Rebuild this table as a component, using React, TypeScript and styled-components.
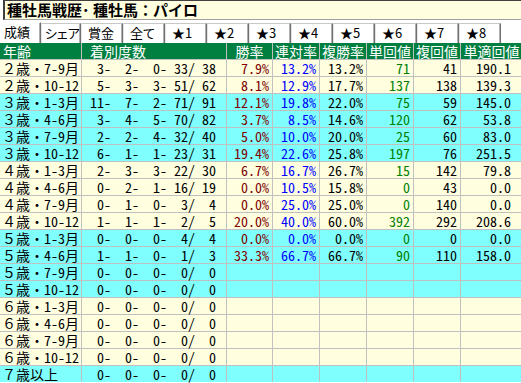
import React from "react";
import styled, { createGlobalStyle } from "styled-components";

const GlobalStyle = createGlobalStyle`
  html, body { margin: 0; padding: 0; background: #ffffff; overflow: hidden; }
  body { font-family: "Noto Sans Mono CJK JP", "Noto Sans CJK JP", monospace; color: #000; }
`;

const Page = styled.div`
  width: 521px;
  height: 383px;
  overflow: hidden;
  display: flex;
  flex-direction: column;
`;

const TitleBox = styled.div`
  margin-left: 3px;
  height: 20px;
  box-sizing: border-box;
  border-top: 1px solid #404040;
  border-left: 2px solid #404040;
  border-bottom: 1px solid #a0a0a0;
  background: #ffffe0;
  padding-left: 2px;
  font-family: "Noto Sans CJK JP", sans-serif;
  font-weight: bold;
  font-size: 15px;
  line-height: 18px;
  white-space: nowrap;
`;

const TabBar = styled.div`
  display: flex;
  height: 21px;
  margin-top: 2px;
`;

const Tab = styled.div<{ $active?: boolean; $w: number; $pad: number }>`
  width: ${(p) => p.$w}px;
  box-sizing: border-box;
  margin-top: ${(p) => (p.$active ? 0 : 1)}px;
  border-top: 1px solid ${(p) => (p.$active ? "#ffffff" : "#c8c8c8")};
  border-left: 1px solid ${(p) => (p.$active ? "#ffffff" : "#e4e4e4")};
  border-right: 1px solid #707070;
  box-shadow: inset -1px 0 0 #b0b0b0;
  padding-left: ${(p) => p.$pad}px;
  font-family: "Noto Sans CJK JP", sans-serif;
  font-feature-settings: "palt";
  font-size: 13px;
  line-height: 18px;
  white-space: nowrap;
  background: #ffffff;
`;

const Table = styled.div`
  display: flex;
  flex-direction: column;
  row-gap: 1px;
  background: #c0c0c0;
  width: 522px;
`;

const Row = styled.div`
  display: grid;
  grid-template-columns: 81px 144px 45px 46px 46px 46px 46px 61px;
  column-gap: 1px;
  height: 16px;
`;

const HeadCell = styled.div<{ $align?: "left" | "center"; $pad?: number }>`
  background: #008040;
  color: #ffffff;
  font-size: 14px;
  line-height: 16px;
  text-align: ${(p) => p.$align ?? "center"};
  padding-left: ${(p) => p.$pad ?? 0}px;
  white-space: nowrap;
`;

const Cell = styled.div<{ $bg: string; $color?: string; $right?: number; $left?: number }>`
  box-sizing: border-box;
  background: ${(p) => p.$bg};
  color: ${(p) => p.$color ?? "#000000"};
  font-size: 14px;
  line-height: 15px;
  padding-top: 1px;
  text-align: ${(p) => (p.$left !== undefined ? "left" : "right")};
  padding-left: ${(p) => p.$left ?? 0}px;
  padding-right: ${(p) => p.$right ?? 3}px;
  white-space: nowrap;
`;

const CountCell = styled.div<{ $bg: string }>`
  box-sizing: border-box;
  background: ${(p) => p.$bg};
  display: flex;
  padding-left: 1px;
  padding-top: 1px;
  font-size: 14px;
  line-height: 15px;
  white-space: nowrap;
`;

const Field = styled.span<{ $w: number }>`
  display: inline-block;
  width: ${(p) => p.$w}px;
  text-align: right;
`;

const CREAM = "#ffffe0";
const CYAN = "#80ffff";

type R = {
  age: string;
  c: [string, string, string, string, string];
  v?: [string, string, string, string, string, string];
  bg: string;
};

const rows: R[] = [
  { age: "２歳・7-9月", c: ["3-", "2-", "0-", "33/", "38"], v: ["7.9%", "13.2%", "13.2%", "71", "41", "190.1"], bg: CREAM },
  { age: "２歳・10-12", c: ["5-", "3-", "3-", "51/", "62"], v: ["8.1%", "12.9%", "17.7%", "137", "138", "139.3"], bg: CREAM },
  { age: "３歳・1-3月", c: ["11-", "7-", "2-", "71/", "91"], v: ["12.1%", "19.8%", "22.0%", "75", "59", "145.0"], bg: CYAN },
  { age: "３歳・4-6月", c: ["3-", "4-", "5-", "70/", "82"], v: ["3.7%", "8.5%", "14.6%", "120", "62", "53.8"], bg: CYAN },
  { age: "３歳・7-9月", c: ["2-", "2-", "4-", "32/", "40"], v: ["5.0%", "10.0%", "20.0%", "25", "60", "83.0"], bg: CYAN },
  { age: "３歳・10-12", c: ["6-", "1-", "1-", "23/", "31"], v: ["19.4%", "22.6%", "25.8%", "197", "76", "251.5"], bg: CYAN },
  { age: "４歳・1-3月", c: ["2-", "3-", "3-", "22/", "30"], v: ["6.7%", "16.7%", "26.7%", "15", "142", "79.8"], bg: CREAM },
  { age: "４歳・4-6月", c: ["0-", "2-", "1-", "16/", "19"], v: ["0.0%", "10.5%", "15.8%", "0", "43", "0.0"], bg: CREAM },
  { age: "４歳・7-9月", c: ["0-", "1-", "0-", "3/", "4"], v: ["0.0%", "25.0%", "25.0%", "0", "140", "0.0"], bg: CREAM },
  { age: "４歳・10-12", c: ["1-", "1-", "1-", "2/", "5"], v: ["20.0%", "40.0%", "60.0%", "392", "292", "208.6"], bg: CREAM },
  { age: "５歳・1-3月", c: ["0-", "0-", "0-", "4/", "4"], v: ["0.0%", "0.0%", "0.0%", "0", "0", "0.0"], bg: CYAN },
  { age: "５歳・4-6月", c: ["1-", "1-", "0-", "1/", "3"], v: ["33.3%", "66.7%", "66.7%", "90", "110", "158.0"], bg: CYAN },
  { age: "５歳・7-9月", c: ["0-", "0-", "0-", "0/", "0"], bg: CYAN },
  { age: "５歳・10-12", c: ["0-", "0-", "0-", "0/", "0"], bg: CYAN },
  { age: "６歳・1-3月", c: ["0-", "0-", "0-", "0/", "0"], bg: CREAM },
  { age: "６歳・4-6月", c: ["0-", "0-", "0-", "0/", "0"], bg: CREAM },
  { age: "６歳・7-9月", c: ["0-", "0-", "0-", "0/", "0"], bg: CREAM },
  { age: "６歳・10-12", c: ["0-", "0-", "0-", "0/", "0"], bg: CREAM },
  { age: "７歳以上", c: ["0-", "0-", "0-", "0/", "0"], bg: CYAN },
];

const tabs: { label: string; w: number; pad: number; active?: boolean }[] = [
  { label: "成績", w: 41, pad: 3, active: true },
  { label: "シェア", w: 40, pad: 3 },
  { label: "賞金", w: 42, pad: 6 },
  { label: "全て", w: 42, pad: 6 },
  { label: "★1", w: 42, pad: 6 },
  { label: "★2", w: 42, pad: 6 },
  { label: "★3", w: 42, pad: 6 },
  { label: "★4", w: 42, pad: 6 },
  { label: "★5", w: 42, pad: 6 },
  { label: "★6", w: 42, pad: 6 },
  { label: "★7", w: 42, pad: 6 },
  { label: "★8", w: 42, pad: 6 },
];

const valueColors = ["#800000", "#0000ff", "#000000", "#008000", "#000000", "#000000"];
const fieldWidths = [28, 28, 28, 28, 21];

export default function App() {
  return (
    <Page>
      <GlobalStyle />
      <TitleBox>種牡馬戦歴･ 種牡馬：パイロ</TitleBox>
      <TabBar>
        {tabs.map((t) => (
          <Tab key={t.label} $active={t.active} $w={t.w} $pad={t.pad}>
            {t.label}
          </Tab>
        ))}
      </TabBar>
      <Table>
        <Row>
          <HeadCell $align="left" $pad={3}>年齢</HeadCell>
          <HeadCell $align="left" $pad={8}>着別度数</HeadCell>
          <HeadCell>勝率</HeadCell>
          <HeadCell>連対率</HeadCell>
          <HeadCell>複勝率</HeadCell>
          <HeadCell>単回値</HeadCell>
          <HeadCell>複回値</HeadCell>
          <HeadCell>単適回値</HeadCell>
        </Row>
        {rows.map((r) => (
          <Row key={r.age}>
            <Cell $bg={r.bg} $left={2}>{r.age}</Cell>
            <CountCell $bg={r.bg}>
              {r.c.map((f, i) => (
                <Field key={i} $w={fieldWidths[i]}>{f}</Field>
              ))}
            </CountCell>
            {[0, 1, 2, 3, 4, 5].map((i) => (
              <Cell key={i} $bg={r.bg} $color={valueColors[i]} $right={i === 5 ? 11 : 3}>
                {r.v ? r.v[i] : ""}
              </Cell>
            ))}
          </Row>
        ))}
      </Table>
    </Page>
  );
}
